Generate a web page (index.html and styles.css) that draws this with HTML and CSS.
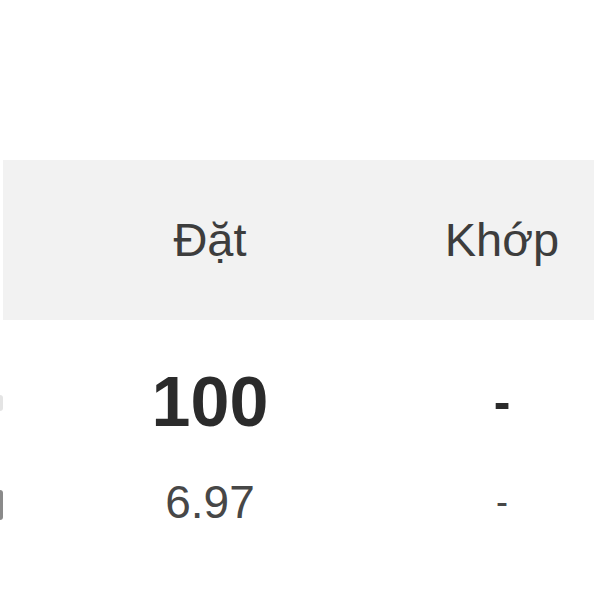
FILE: index.html
```html
<!DOCTYPE html>
<html lang="vi">
<head>
<meta charset="utf-8">
<link rel="stylesheet" href="styles.css">
</head>
<body>
<div class="table">
  <div class="row head">
    <div class="cell lead"></div>
    <div class="cell">Đặt</div>
    <div class="cell">Khớp</div>
  </div>
  <div class="row main">
    <div class="cell lead"><span class="edge faint"></span></div>
    <div class="cell">100</div>
    <div class="cell dash">-</div>
  </div>
  <div class="row sub">
    <div class="cell lead"><span class="edge"></span></div>
    <div class="cell">6.97</div>
    <div class="cell dash">-</div>
  </div>
</div>
</body>
</html>
```
FILE: styles.css
```css
html, body {
  margin: 0;
  padding: 0;
  background: #ffffff;
}
body {
  width: 600px;
  height: 600px;
  overflow: hidden;
  font-family: "Liberation Sans", Arial, sans-serif;
}
.table {
  padding-top: 160px;
}
.row {
  display: grid;
  grid-template-columns: 4px 200px 172px;
  column-gap: 106px;
  align-items: center;
  text-align: center;
}
.head {
  margin: 0 6px 0 3px;
  grid-template-columns: 1px 200px 172px;
  height: 160px;
  background: #f2f2f2;
  font-size: 47px;
  color: #3d3d3d;
  line-height: 60px;
}
.main {
  margin-top: 45px;
  line-height: 75px;
  font-size: 70px;
  font-weight: bold;
  color: #2b2b2b;
}
.main .dash {
  font-size: 50px;
}
.sub {
  margin-top: 32px;
  line-height: 60px;
  font-size: 46px;
  color: #474747;
}
.sub .dash {
  font-size: 36px;
}
.lead {
  position: relative;
  height: 100%;
}
.edge {
  position: absolute;
  left: 0;
  top: 18px;
  width: 3px;
  height: 30px;
  background: #8a8a8a;
  border-radius: 0 3px 3px 0;
}
.edge.faint {
  top: 30px;
  height: 16px;
  background: #e4e4e4;
}
```
